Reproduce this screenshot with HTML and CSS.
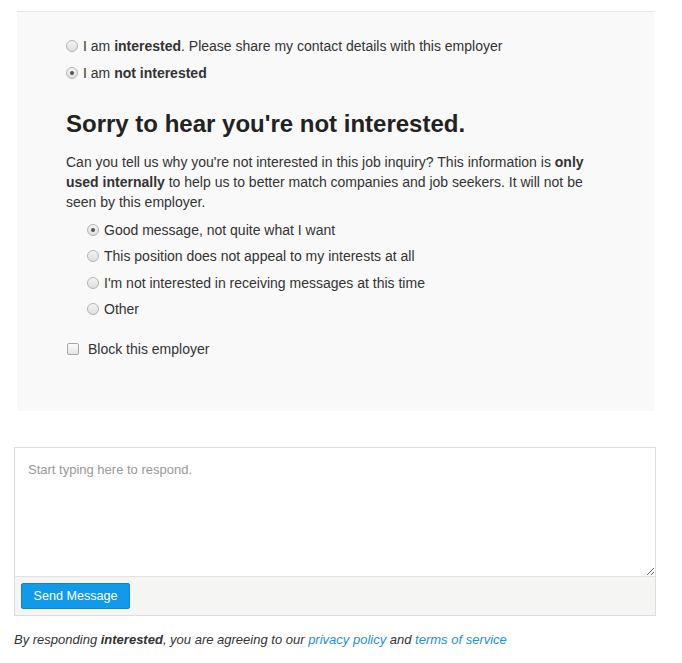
FILE: index.html
```html
<!doctype html>
<html>
    <head>
        <link rel="stylesheet" href="styles.css">
    </head>
    <body>
        <div class="page">
            <form class="reply-panel" onsubmit="return false;">
                <label class="choice">
                    <input type="radio" name="interest" value="yes">
                    <span>I am <b>interested</b>. Please share my contact details with this employer</span>
                </label>
                <label class="choice">
                    <input type="radio" name="interest" value="no" checked>
                    <span>I am <b>not interested</b></span>
                </label>

                <h2 class="sorry">Sorry to hear you're not interested.</h2>
                <p class="why">Can you tell us why you're not interested in this job inquiry? This information is <b>only</b> <b>used internally</b> to help us to better match companies and job seekers. It will not be seen by this employer.</p>

                <div class="reasons">
                    <label class="choice">
                        <input type="radio" name="reason" value="good" checked>
                        <span>Good message, not quite what I want</span>
                    </label>
                    <label class="choice">
                        <input type="radio" name="reason" value="position">
                        <span>This position does not appeal to my interests at all</span>
                    </label>
                    <label class="choice">
                        <input type="radio" name="reason" value="time">
                        <span>I'm not interested in receiving messages at this time</span>
                    </label>
                    <label class="choice">
                        <input type="radio" name="reason" value="other">
                        <span>Other</span>
                    </label>
                </div>

                <label class="choice block">
                    <input type="checkbox" name="block">
                    <span>Block this employer</span>
                </label>
            </form>

            <div class="compose">
                <textarea class="message" placeholder="Start typing here to respond."></textarea>
                <div class="compose-bar">
                    <button class="send">Send Message</button>
                </div>
            </div>

            <p class="terms">By responding <b>interested</b>, you are agreeing to our <a href="#">privacy policy</a> and <a href="#">terms of service</a></p>
        </div>
    </body>
</html>
```

FILE: styles.css
```css
body {
    margin: 0;
    font-family: "Liberation Sans", Arial, sans-serif;
    font-size: 14px;
    color: #333;
    background: #fff;
}
.page {
    padding: 11px 26px 0 14px;
}
.reply-panel {
    margin: 0 2px 0 3px;
    padding: 24px 50px 52px 49px;
    background: #f9f9f9;
    border-top: 1px solid #e6e6e6;
}
.choice {
    display: flex;
    align-items: center;
    height: 20px;
    line-height: 20px;
}
.choice + .choice {
    margin-top: 7px;
}
.choice input {
    margin: 0 5px 0 0;
}
input[type="radio"] {
    -webkit-appearance: none;
    appearance: none;
    width: 12px;
    height: 12px;
    border: 1px solid #b4b4b4;
    border-radius: 50%;
    background: linear-gradient(#f4f4f4, #dedede);
    position: relative;
}
input[type="radio"]:checked::after {
    content: "";
    position: absolute;
    left: 3px;
    top: 3px;
    width: 4px;
    height: 4px;
    border-radius: 50%;
    background: #555;
}
input[type="checkbox"] {
    -webkit-appearance: none;
    appearance: none;
    width: 12px;
    height: 12px;
    border: 1px solid #a8a8a8;
    border-radius: 2px;
    background: linear-gradient(#fcfcfc, #e4e4e4);
}
.sorry {
    margin: 27px 0 0;
    font-size: 24px;
    line-height: 28px;
    color: #222;
}
.why {
    margin: 14px 0 0;
    line-height: 20px;
}
.reasons {
    margin: 8px 0 0 21px;
}
.reasons .choice + .choice {
    margin-top: 6.4px;
}
.block {
    margin-top: 20px;
}
.block input {
    margin: 0 9px 0 1px;
}
.compose {
    margin-top: 36px;
    border: 1px solid #ddd;
}
.message {
    display: block;
    box-sizing: border-box;
    width: 100%;
    height: 128px;
    margin: 0;
    padding: 14px 13px;
    border: 0;
    font-family: "Liberation Sans", Arial, sans-serif;
    font-size: 13px;
    color: #333;
}
.message::placeholder {
    color: #999;
}
.compose-bar {
    padding: 6px 6px 6px;
    background: #f5f5f4;
    border-top: 1px solid #e2e2e2;
}
.send {
    display: block;
    width: 109px;
    height: 26px;
    background: #129aea;
    color: #fff;
    border: 1px solid #0b86cc;
    border-radius: 2px;
    font-family: "Liberation Sans", Arial, sans-serif;
    font-size: 12.6px;
    cursor: pointer;
}
.terms {
    margin: 14px 0 0;
    font-size: 13px;
    line-height: 20px;
    font-style: italic;
    color: #333;
}
.terms a {
    color: #1e8ee0;
    text-decoration: none;
}
```
